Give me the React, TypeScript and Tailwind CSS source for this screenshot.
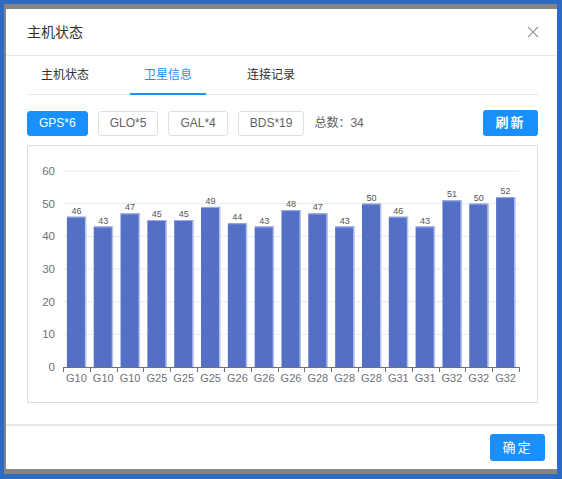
const bars = [
    { name: 'G10', value: 46 },
    { name: 'G10', value: 43 },
    { name: 'G10', value: 47 },
    { name: 'G25', value: 45 },
    { name: 'G25', value: 45 },
    { name: 'G25', value: 49 },
    { name: 'G26', value: 44 },
    { name: 'G26', value: 43 },
    { name: 'G26', value: 48 },
    { name: 'G28', value: 47 },
    { name: 'G28', value: 43 },
    { name: 'G28', value: 50 },
    { name: 'G31', value: 46 },
    { name: 'G31', value: 43 },
    { name: 'G32', value: 51 },
    { name: 'G32', value: 50 },
    { name: 'G32', value: 52 },
];

const systems = ['GPS*6', 'GLO*5', 'GAL*4', 'BDS*19'];
const tabs = ['主机状态', '卫星信息', '连接记录'];

// chart geometry, in svg coords (box inner area)
const LEFT = 35;
const RIGHT = 491;
const Y0 = 221;
const Y60 = 25;
const unit = (Y0 - Y60) / 60;
const band = (RIGHT - LEFT) / bars.length;
const barW = 19;

function SatelliteChart() {
    return (
        <svg width="508" height="256" viewBox="0 0 508 256" className="block">
            {[0, 10, 20, 30, 40, 50, 60].map((v) => {
                const y = Y0 - v * unit;
                return (
                    <g key={v}>
                        {v > 0 && <line x1={LEFT} x2={RIGHT} y1={y} y2={y} stroke="#e6eaf3" strokeWidth="1" />}
                        <text x={27} y={y + 4} textAnchor="end" fontSize="11.5" fill="#6e7079">{v}</text>
                    </g>
                );
            })}

            {bars.map((b, i) => {
                const cx = LEFT + band * i + band / 2;
                const top = Y0 - b.value * unit;
                return (
                    <g key={i}>
                        <rect x={cx - barW / 2} y={top} width={barW} height={Y0 - top} fill="#5470c6" />
                        <rect x={cx + barW / 2 - 1} y={top} width={1.5} height={Y0 - top} fill="#b8c4ec" />
                        <rect x={cx - barW / 2} y={top} width={barW} height={1} fill="#9aabe0" />
                        <text x={cx} y={top - 3} textAnchor="middle" fontSize="9" fill="#555">{b.value}</text>
                        <text x={cx} y={236} textAnchor="middle" fontSize="11" fill="#6e7079">{b.name}</text>
                    </g>
                );
            })}

            <line x1={LEFT} x2={RIGHT} y1={Y0 + 0.5} y2={Y0 + 0.5} stroke="#6e7079" strokeWidth="1" />
            {Array.from({ length: bars.length + 1 }).map((_, i) => {
                const x = Math.round(LEFT + band * i) + 0.5;
                return <line key={i} x1={x} x2={x} y1={Y0} y2={Y0 + 5} stroke="#6e7079" strokeWidth="1" />;
            })}
        </svg>
    );
}

export default function App() {
    return (
        <div
            className="w-[562px] h-[479px] bg-[#2c6bc4] pt-[4px] pl-[4px] pr-[5px] pb-[5px]"
            style={{ fontFamily: '"Liberation Sans", "Noto Sans CJK SC", sans-serif' }}
        >
            <div className="w-full h-full bg-[#858585] pt-[5px] pl-[2px] pb-[5px]">
                <div className="w-full h-full bg-white flex flex-col">
                    {/* Header */}
                    <div className="h-[47px] shrink-0 flex items-center justify-between pl-[21px] pr-[17px] border-b border-[#e8e8e8]">
                        <span className="text-[14px] text-[#303133]">主机状态</span>
                        <svg width="12" height="12" viewBox="0 0 12 12" className="mr-[1px]">
                            <path d="M1 1 L11 11 M11 1 L1 11" stroke="#9a9da3" strokeWidth="1.2" fill="none" />
                        </svg>
                    </div>

                    {/* Body */}
                    <div className="flex-1 pl-[21px] pr-[19px]">
                        <div className="flex gap-[27px] border-b border-[#e4e7ed]">
                            {tabs.map((t, i) => (
                                <div
                                    key={t}
                                    className={`h-[39px] px-[14px] flex items-center text-[12px] border-b-2 -mb-px ${i === 1 ? 'text-[#1890ff] border-[#1890ff]' : 'text-[#303133] border-transparent'}`}
                                >
                                    {t}
                                </div>
                            ))}
                        </div>

                        <div className="mt-[15px] flex items-center">
                            <div className="flex items-center gap-[10px]">
                                {systems.map((s, i) => (
                                    <div
                                        key={s}
                                        className={`h-[25px] px-[11px] flex items-center rounded-[3px] text-[12px] ${i === 0 ? 'bg-[#1890ff] text-white border border-[#1890ff]' : 'bg-white text-[#606266] border border-[#dcdfe6]'}`}
                                    >
                                        {s}
                                    </div>
                                ))}
                            </div>
                            <span className="ml-[10px] text-[12px] text-[#606266]">总数：34</span>
                            <div className="ml-auto h-[26px] w-[55px] flex items-center justify-center rounded-[3px] bg-[#1890ff] text-white text-[13px] font-bold tracking-[2px]">
                                刷新
                            </div>
                        </div>

                        <div className="mt-[9px] h-[258px] border border-[#dddddd]">
                            <SatelliteChart />
                        </div>
                    </div>

                    {/* Footer */}
                    <div className="h-[45px] shrink-0 border-t-2 border-[#e8e8e8] flex items-center justify-end pr-[12px]">
                        <div className="h-[27px] w-[55px] flex items-center justify-center rounded-[3px] bg-[#1890ff] text-white text-[13px] tracking-[2px]">
                            确定
                        </div>
                    </div>
                </div>
            </div>
        </div>
    );
}
